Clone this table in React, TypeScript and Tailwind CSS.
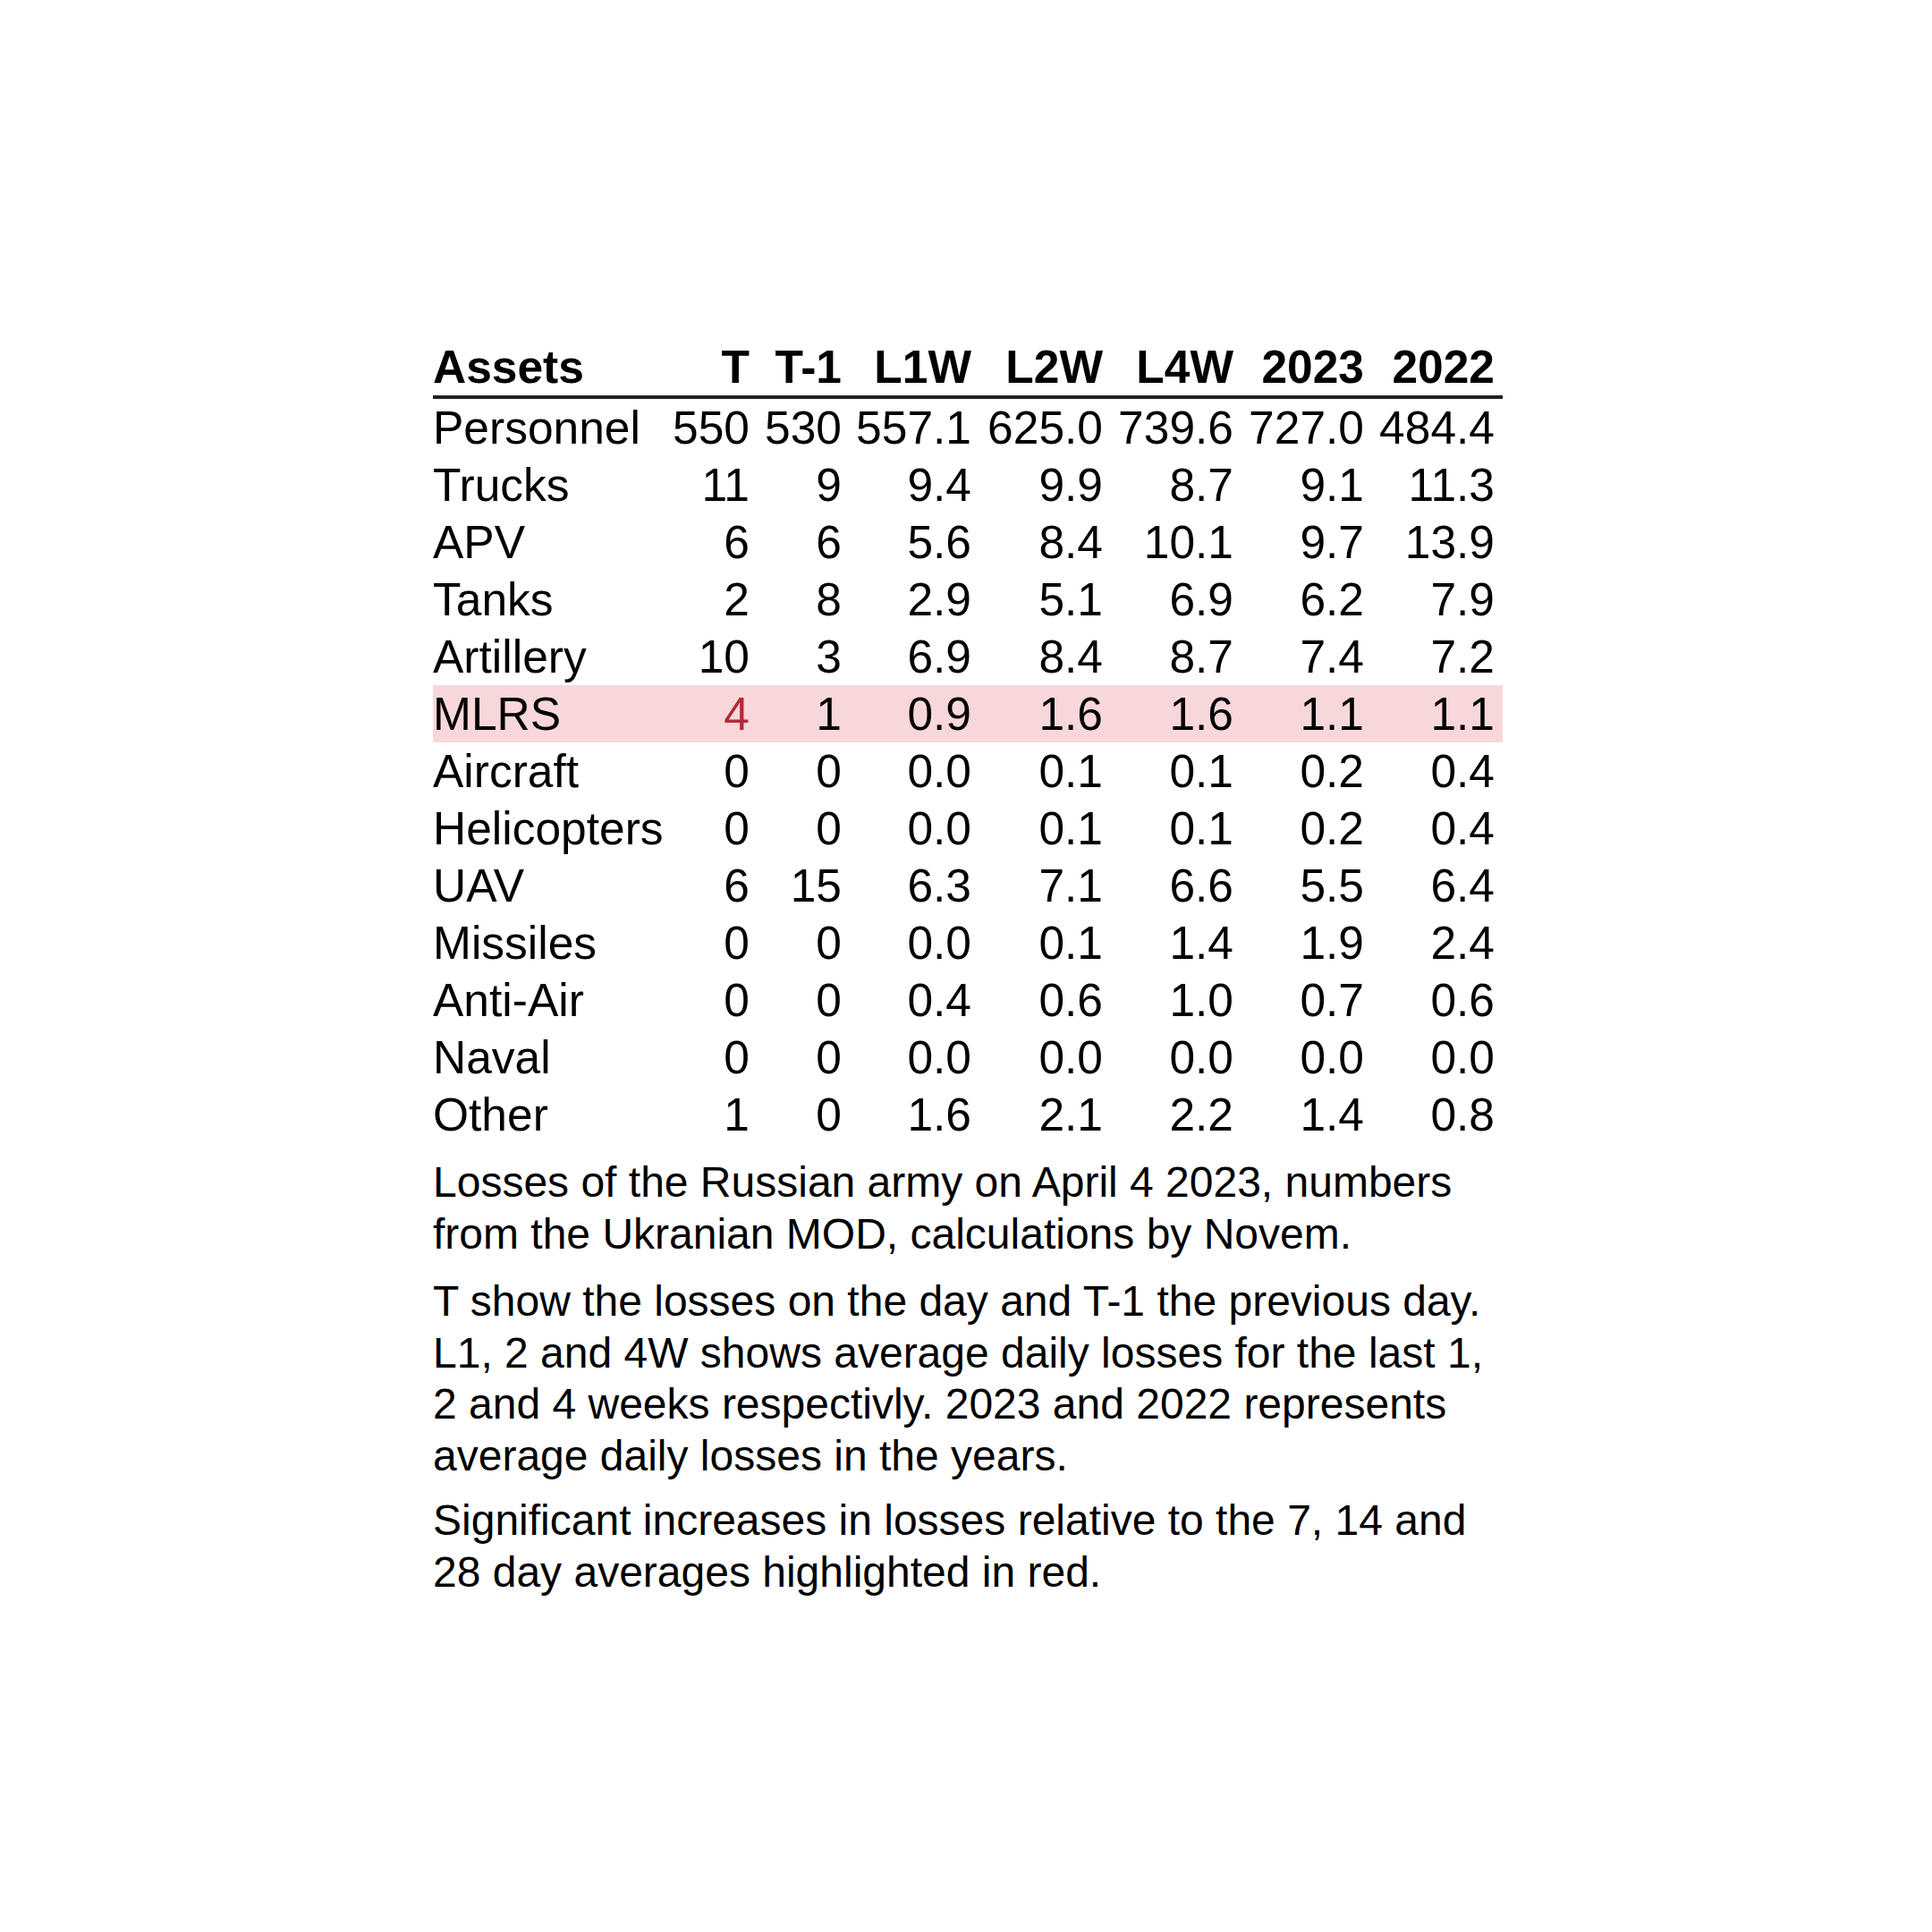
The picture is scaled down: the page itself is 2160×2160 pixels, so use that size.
import React from "react";

type Row = { name: string; values: string[]; highlight?: boolean; red?: number[] };

const headers = ["T", "T-1", "L1W", "L2W", "L4W", "2023", "2022"];

const rows: Row[] = [
  { name: "Personnel", values: ["550", "530", "557.1", "625.0", "739.6", "727.0", "484.4"] },
  { name: "Trucks", values: ["11", "9", "9.4", "9.9", "8.7", "9.1", "11.3"] },
  { name: "APV", values: ["6", "6", "5.6", "8.4", "10.1", "9.7", "13.9"] },
  { name: "Tanks", values: ["2", "8", "2.9", "5.1", "6.9", "6.2", "7.9"] },
  { name: "Artillery", values: ["10", "3", "6.9", "8.4", "8.7", "7.4", "7.2"] },
  { name: "MLRS", values: ["4", "1", "0.9", "1.6", "1.6", "1.1", "1.1"], highlight: true, red: [0] },
  { name: "Aircraft", values: ["0", "0", "0.0", "0.1", "0.1", "0.2", "0.4"] },
  { name: "Helicopters", values: ["0", "0", "0.0", "0.1", "0.1", "0.2", "0.4"] },
  { name: "UAV", values: ["6", "15", "6.3", "7.1", "6.6", "5.5", "6.4"] },
  { name: "Missiles", values: ["0", "0", "0.0", "0.1", "1.4", "1.9", "2.4"] },
  { name: "Anti-Air", values: ["0", "0", "0.4", "0.6", "1.0", "0.7", "0.6"] },
  { name: "Naval", values: ["0", "0", "0.0", "0.0", "0.0", "0.0", "0.0"] },
  { name: "Other", values: ["1", "0", "1.6", "2.1", "2.2", "1.4", "0.8"] },
];

const App = () => {
  return (
    <div className="w-[2160px] h-[2160px] bg-white pt-[378px] pl-[484px] font-['Liberation_Sans',Arial,sans-serif] text-black">
      <div className="w-[1196px]">
        <table className="w-[1196px] table-fixed border-collapse text-[51.5px] leading-[64px]">
          <colgroup>
            <col className="w-[260px]" />
            <col className="w-[103px]" />
            <col className="w-[103px]" />
            <col className="w-[145px]" />
            <col className="w-[147px]" />
            <col className="w-[146px]" />
            <col className="w-[146px]" />
            <col className="w-[146px]" />
          </colgroup>
          <thead>
            <tr className="border-b-4 border-[#222]">
              <th className="text-left font-bold p-0 whitespace-nowrap">Assets</th>
              {headers.map((h) => (
                <th key={h} className="text-right font-bold p-0 pr-[9px] whitespace-nowrap">
                  {h}
                </th>
              ))}
            </tr>
          </thead>
          <tbody>
            {rows.map((row) => (
              <tr key={row.name} className={row.highlight ? "bg-[#f8d7da]" : ""}>
                <td className="text-left p-0 whitespace-nowrap">{row.name}</td>
                {row.values.map((v, i) => (
                  <td
                    key={i}
                    className={
                      row.red?.includes(i)
                        ? "text-right p-0 pr-[9px] whitespace-nowrap text-[#b22a3a]"
                        : "text-right p-0 pr-[9px] whitespace-nowrap"
                    }
                  >
                    {v}
                  </td>
                ))}
              </tr>
            ))}
          </tbody>
        </table>

        <div className="text-[48px] leading-[57.5px]">
          <p className="mt-[15px]">
            Losses of the Russian army on April 4 2023, numbers from the Ukranian MOD, calculations by Novem.
          </p>
          <p className="mt-[18px]">
            T show the losses on the day and T-1 the previous day. L1, 2 and 4W shows average daily losses for
            the last 1, 2 and 4 weeks respectivly. 2023 and 2022 represents average daily losses in the years.
          </p>
          <p className="mt-[15px]">
            Significant increases in losses relative to the 7, 14 and 28 day averages highlighted in red.
          </p>
        </div>
      </div>
    </div>
  );
};

export default App;
